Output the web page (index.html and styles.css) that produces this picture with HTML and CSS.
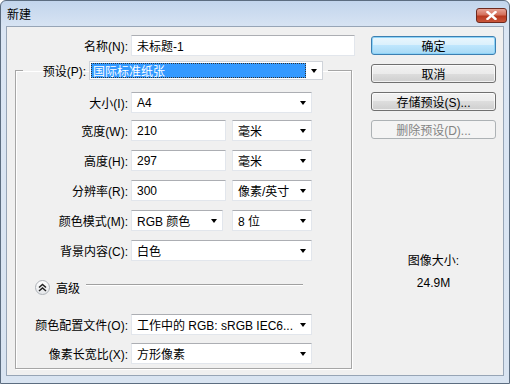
FILE: index.html
```html
<!DOCTYPE html>
<html lang="zh">
<head>
    <meta charset="UTF-8">
    <title>新建</title>
    <link rel="stylesheet" href="styles.css">
</head>
<body>
    <div class="window">
        <div class="titlebar">
            <span class="title">新建</span>
            <span class="close-btn">
                <svg width="11" height="9" viewBox="0 0 11 9">
                    <path d="M1.5 1 L9.5 8 M9.5 1 L1.5 8" stroke="#fff" stroke-width="2.4" stroke-linecap="square"/>
                </svg>
            </span>
        </div>
        <div class="client">
            <div class="main">
                <div class="row name-row">
                    <span class="lbl">名称(N):</span>
                    <div class="field name-field">未标题-1</div>
                </div>
                <fieldset class="group">
                    <legend class="preset">
                        <span class="preset-inner">
                            <span class="preset-lbl">预设(P):</span>
                            <span class="combo preset-combo"><span class="sel">国际标准纸张</span><i class="arrow"></i></span>
                        </span>
                    </legend>
                    <div class="row r1">
                        <span class="lbl">大小(I):</span>
                        <div class="combo full">A4<i class="arrow"></i></div>
                    </div>
                    <div class="row r2">
                        <span class="lbl">宽度(W):</span>
                        <div class="field num">210</div>
                        <div class="combo unit">毫米<i class="arrow"></i></div>
                    </div>
                    <div class="row">
                        <span class="lbl">高度(H):</span>
                        <div class="field num">297</div>
                        <div class="combo unit">毫米<i class="arrow"></i></div>
                    </div>
                    <div class="row">
                        <span class="lbl">分辨率(R):</span>
                        <div class="field num">300</div>
                        <div class="combo unit">像素/英寸<i class="arrow"></i></div>
                    </div>
                    <div class="row">
                        <span class="lbl">颜色模式(M):</span>
                        <div class="combo mode">RGB 颜色<i class="arrow"></i></div>
                        <div class="combo unit bits">8 位<i class="arrow"></i></div>
                    </div>
                    <div class="row">
                        <span class="lbl">背景内容(C):</span>
                        <div class="combo full">白色<i class="arrow"></i></div>
                    </div>
                    <div class="advanced">
                        <span class="adv-icon">
                            <svg width="9" height="9" viewBox="0 0 9 9">
                                <path d="M1 4.5 L4.5 1.5 L8 4.5 M1 8 L4.5 5 L8 8" fill="none" stroke="#222" stroke-width="1.5"/>
                            </svg>
                        </span>
                        <span class="adv-text">高级</span>
                        <span class="adv-line"></span>
                    </div>
                    <div class="row r-profile">
                        <span class="lbl">颜色配置文件(O):</span>
                        <div class="combo full">工作中的 RGB: sRGB IEC6...<i class="arrow"></i></div>
                    </div>
                    <div class="row r-last">
                        <span class="lbl">像素长宽比(X):</span>
                        <div class="combo full">方形像素<i class="arrow"></i></div>
                    </div>
                </fieldset>
            </div>
            <div class="side">
                <div class="btn default">确定</div>
                <div class="btn">取消</div>
                <div class="btn">存储预设(S)...</div>
                <div class="btn disabled">删除预设(D)...</div>
                <div class="info">
                    <div class="info-label">图像大小:</div>
                    <div class="info-value">24.9M</div>
                </div>
            </div>
        </div>
    </div>
</body>
</html>
```

FILE: styles.css
```css
body {
    margin: 0;
    font-family: 'Liberation Sans', 'Noto Sans CJK SC', sans-serif;
    font-size: 12px;
    color: #000;
    background: #fff;
}
.window {
    width: 510px;
    height: 384px;
    box-sizing: border-box;
    background: linear-gradient(#c2d5ec, #dbe6f4 30px, #d9e4f1);
    border: 1px solid #5c6d80;
    border-radius: 6px 6px 0 0;
    display: flex;
    flex-direction: column;
    padding: 0 5px 7px 5px;
}
.titlebar {
    height: 25px;
    display: flex;
    align-items: center;
    justify-content: space-between;
}
.title {
    padding-left: 1px;
    padding-bottom: 1px;
}
.close-btn {
    width: 31px;
    height: 15px;
    margin-right: -3px;
    margin-top: 3px;
    box-sizing: border-box;
    border: 1px solid #6e2a1f;
    border-radius: 3px;
    background: linear-gradient(#e8a496, #d4705b 45%, #b8391f 55%, #c9563b);
    display: flex;
    align-items: center;
    justify-content: center;
}
.client {
    flex: 1;
    background: #f0f0f0;
    border: 1px solid #97a5b6;
    display: flex;
}
.main {
    width: 364px;
}
.row {
    display: flex;
    align-items: center;
    height: 21px;
    margin-top: 9px;
}
.lbl {
    text-align: right;
    white-space: nowrap;
    margin-right: 3px;
}
.name-row {
    margin-top: 8px;
}
.name-row .lbl {
    width: 121px;
}
.field, .combo {
    height: 21px;
    box-sizing: border-box;
    background: #fff;
    border: 1px solid #e2e6ec;
    border-top-color: #acaeb3;
    padding-left: 5px;
    display: flex;
    align-items: center;
    white-space: nowrap;
}
.name-field {
    width: 224px;
}
.combo {
    position: relative;
    padding-right: 16px;
}
.arrow {
    position: absolute;
    right: 5px;
    top: 8px;
    width: 0;
    height: 0;
    border-left: 3.5px solid transparent;
    border-right: 3.5px solid transparent;
    border-top: 4px solid #000;
}

.group {
    margin: 5px 0 0 8px;
    width: 337px;
    box-sizing: border-box;
    padding: 0 0 4px 0;
    border: 1px solid #a6a6a6;
    box-shadow: 1px 1px 0 #fff, inset 1px 1px 0 #fff;
    min-width: 0;
}
.group .lbl {
    width: 112px;
}
.preset {
    margin-left: 7px;
    padding: 0;
}
.preset-inner {
    display: flex;
    align-items: center;
    height: 19px;
    padding-right: 5px;
}
.preset-lbl {
    width: 63px;
    text-align: right;
    white-space: nowrap;
    margin-right: 3px;
}
.preset-combo {
    width: 234px;
    height: 19px;
    padding: 1px 16px 1px 1px;
    border-color: #cfd3d9;
}
.sel {
    flex: 1;
    height: 100%;
    box-sizing: border-box;
    background: #3399ff;
    color: #fff;
    outline: 1px dotted #333;
    outline-offset: -1px;
    padding-left: 2px;
    display: flex;
    align-items: center;
}
.preset-combo .arrow {
    top: 7px;
}
.r1 {
    margin-top: 12px;
}
.r2 {
    margin-top: 7px;
}
.full {
    width: 181px;
}
.num {
    width: 95px;
}
.unit {
    width: 80px;
    margin-left: 6px;
}
.mode {
    width: 92px;
}
.bits {
    margin-left: 9px;
}

.advanced {
    display: flex;
    align-items: center;
    height: 16px;
    margin: 18px 48px 0 19px;
}
.adv-icon {
    width: 15px;
    height: 15px;
    box-sizing: border-box;
    border: 1px solid #aeb3b9;
    border-radius: 50%;
    background: linear-gradient(#ffffff, #e4e6e9);
    display: flex;
    align-items: center;
    justify-content: center;
}
.adv-text {
    margin-left: 6px;
}
.adv-line {
    flex: 1;
    margin-left: 6px;
    margin-top: -4px;
    border-top: 1px solid #a0a0a0;
    border-bottom: 1px solid #fff;
}
.r-profile {
    margin-top: 19px;
}
.r-last {
    margin-top: 8px;
}

.side {
    width: 125px;
    padding-top: 9px;
    display: flex;
    flex-direction: column;
}
.btn {
    height: 19px;
    box-sizing: border-box;
    margin-bottom: 9px;
    border: 1px solid #707070;
    border-radius: 3px;
    background: linear-gradient(#f2f2f2, #ebebeb 50%, #dddddd 50%, #cfcfcf);
    display: flex;
    align-items: center;
    justify-content: center;
    box-shadow: inset 0 0 0 1px rgba(255,255,255,0.7);
}
.btn.default {
    border-color: #3c7fb1;
    box-shadow: inset 0 0 0 1px #8ed3f7;
    background: linear-gradient(#eaf6fd, #d9f0fc 50%, #bee6fd 50%, #a7d9f5);
}
.btn.disabled {
    border-color: #adb2b5;
    background: #f4f4f4;
    color: #838383;
    box-shadow: none;
}
.info {
    margin-top: 103px;
    text-align: center;
}
.info-value {
    margin-top: 8px;
}
```
